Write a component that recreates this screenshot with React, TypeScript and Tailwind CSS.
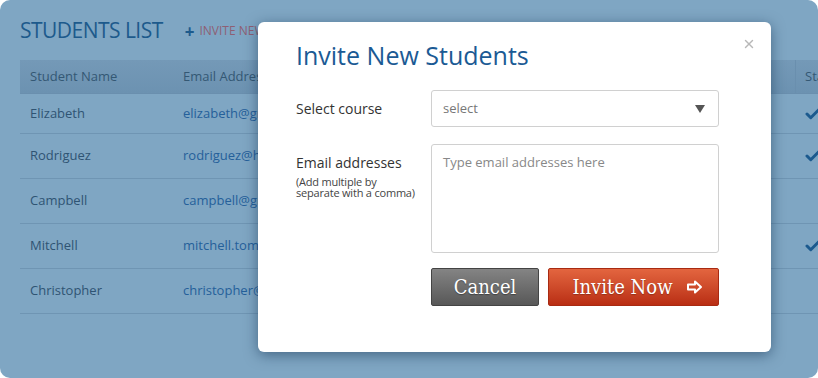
import { Check, X } from 'lucide-react';

const students = [
  { name: 'Elizabeth', email: 'elizabeth@gmail.com', active: true },
  { name: 'Rodriguez', email: 'rodriguez@hotmail.com', active: true },
  { name: 'Campbell', email: 'campbell@gmail.com', active: false },
  { name: 'Mitchell', email: 'mitchell.tom@gmail.com', active: true },
  { name: 'Christopher', email: 'christopher@gmail.com', active: false },
];

function StudentsTable() {
  return (
    <div className="pl-5 pt-[17px]">
      <div className="flex items-center gap-[22px] h-[28px]">
        <h1 className="text-[21px] text-[#1d5a8c] tracking-tight">STUDENTS LIST</h1>
        <span className="flex items-center gap-[5px] text-[12px] text-[#8e5f74]">
          <span className="text-[#1d5a8c] text-[17px] font-bold leading-none">+</span>
          INVITE NEW STUDENTS
        </span>
      </div>

      <div className="mt-[15px] w-[830px]">
        <div className="flex h-[34px] items-center text-[13px] text-[#345874] bg-gradient-to-b from-[#7499b7] to-[#6c92b1] border-b border-[#6a8fae]">
          <div className="w-[163px] pl-[10px]">Student Name</div>
          <div className="flex-1">Email Address</div>
          <div className="w-[55px] h-full border-l border-[#6a8fae] flex items-center pl-[9px]">Status</div>
        </div>
        {students.map((s, i) => (
          <div
            key={s.name}
            className={`flex items-center text-[13px] border-b border-[#6f95b3] ${i === 0 ? 'h-[40px]' : 'h-[45px]'}`}
          >
            <div className="w-[163px] pl-[10px] text-[#2f5473]">{s.name}</div>
            <div className="flex-1 text-[#25609a]">{s.email}</div>
            <div className="w-[55px] pl-[9px]">
              {s.active && <Check size={18} strokeWidth={4} className="text-[#1c5a8e]" />}
            </div>
          </div>
        ))}
      </div>
    </div>
  );
}

function InviteModal() {
  return (
    <div className="absolute left-[258px] top-[22px] w-[513px] h-[330px] bg-white rounded-[6px] shadow-[0_3px_14px_rgba(20,50,80,0.55)]">
      <button className="absolute right-[15px] top-[15px] text-[#b8b8b8]">
        <X size={14} strokeWidth={2.4} />
      </button>
      <div className="pl-[38px] pr-[52px] pt-[16px]">
        <h2 className="text-[25px] text-[#1b5a94] leading-[34px]">Invite New Students</h2>

        <div className="mt-[18px] flex items-center">
          <label className="w-[135px] text-[14px] text-[#333]">Select course</label>
          <div className="flex-1 h-[37px] border border-[#d0d0d0] rounded-[3px] flex items-center justify-between pl-[11px] pr-[13px] text-[13px] text-[#777]">
            <span>select</span>
            <span className="w-0 h-0 border-l-[5px] border-r-[5px] border-t-[8px] border-l-transparent border-r-transparent border-t-[#555]" />
          </div>
        </div>

        <div className="mt-[17px] flex">
          <div className="w-[135px] pt-[9px]">
            <div className="text-[14px] text-[#333] leading-[20px]">Email addresses</div>
            <div className="text-[11px] text-[#444] leading-[11px] mt-[3px] tracking-[-0.2px]">
              (Add multiple by
              <br />
              separate with a comma)
            </div>
          </div>
          <div className="flex-1 h-[109px] border border-[#d0d0d0] rounded-[3px] pl-[11px] pt-[8px] text-[13px] text-[#888]">
            Type email addresses here
          </div>
        </div>

        <div className="mt-[15px] ml-[135px] flex gap-[9px]">
          <button className="w-[108px] h-[38px] rounded-[2px] border border-[#444] bg-gradient-to-b from-[#848484] to-[#585858] text-white text-[20px] font-['DejaVu_Serif_Condensed','DejaVu_Serif',serif] [text-shadow:0_1px_1px_rgba(0,0,0,0.35)]">
            Cancel
          </button>
          <button className="flex-1 h-[38px] rounded-[2px] border border-[#a82a12] bg-gradient-to-b from-[#e3653f] to-[#b92d13] text-white text-[20px] font-['DejaVu_Serif_Condensed','DejaVu_Serif',serif] [text-shadow:0_1px_1px_rgba(0,0,0,0.25)] flex items-center justify-center gap-[14px] pl-[8px]">
            Invite Now
            <svg width="16" height="14" viewBox="0 0 16 14" fill="none" stroke="white" strokeWidth="2" strokeLinejoin="round">
              <path d="M1 4.5h7V1.5l6 5.5-6 5.5v-3H1z" />
            </svg>
          </button>
        </div>
      </div>
    </div>
  );
}

export default function App() {
  return (
    <div className="w-[818px] h-[378px] bg-white font-['Open_Sans',sans-serif]">
      <div className="relative w-full h-full rounded-[10px] bg-[#7fa6c3] overflow-hidden">
        <StudentsTable />
        <InviteModal />
      </div>
    </div>
  );
}
